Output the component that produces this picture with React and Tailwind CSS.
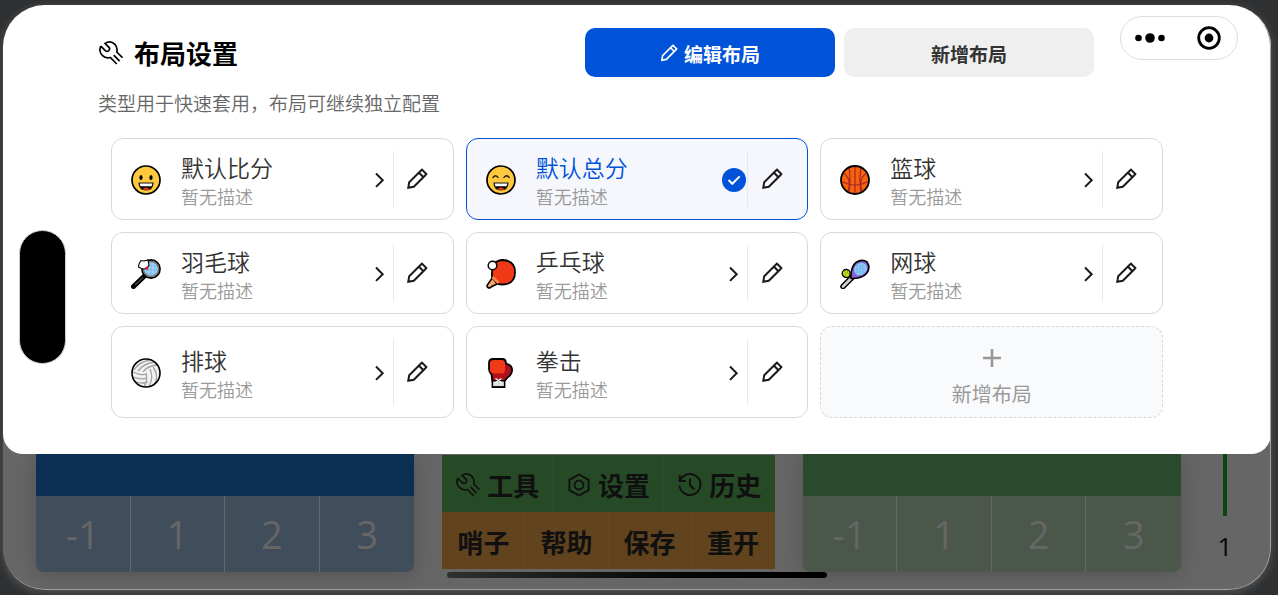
import React from "react";

function WrenchIcon({ className }) {
  return (
    <svg viewBox="0 0 24 24" className={className} fill="none" stroke="currentColor" strokeWidth="1.7" strokeLinejoin="miter" aria-hidden="true">
      <path d="M1.800 5.200 6.300 9.700c1.200 1 2.700.800 3.600-.200.900-1.100.800-2.500-.100-3.400L6 2.400C9.200.500 13.200.700 15.700 3.200c2.100 2.100 2.800 4.900 2.100 7.800l5.700 5.700M1.800 5.200C.4 8.400.9 12 3.300 14.400c2.200 2.200 5.200 2.900 8 2.100l6.500 6.500M14.700 14.200l5.900 5.900" />
    </svg>
  );
}

function PencilIcon({ className }) {
  return (
    <svg viewBox="0 0 24 24" className={className} fill="none" stroke="currentColor" strokeWidth="2.200" strokeLinejoin="miter" aria-hidden="true">
      <path d="M2.500 21.500 3.500 15.500 15.800 3.200l1.600-1.400 4.800 4.800-1.400 1.600L8.500 20.500 2.500 21.500ZM14 5l5 5" />
    </svg>
  );
}

function ChevronIcon() {
  return (
    <svg viewBox="0 0 24 24" className="size-6" fill="none" stroke="#1a1a1a" strokeWidth="2" aria-hidden="true">
      <path d="m8 5.500 6.700 6.700L8 18.900" />
    </svg>
  );
}

function CheckIcon() {
  return (
    <svg viewBox="0 0 24 24" className="size-6" fill="none" aria-hidden="true">
      <circle cx="12" cy="12" r="12" fill="#0052d9" />
      <path d="m6.500 12 3.800 3.800 7.400-7.400" stroke="#fff" strokeWidth="2" />
    </svg>
  );
}

function HexIcon({ className }) {
  return (
    <svg viewBox="0 0 24 24" className={className} fill="none" stroke="currentColor" strokeWidth="1.900" aria-hidden="true">
      <path d="m12 1.500 9.600 5.300v10.400L12 22.500l-9.600-5.300V6.800L12 1.500Z" />
      <circle cx="12" cy="12" r="4.500" />
    </svg>
  );
}

function HistoryIcon({ className }) {
  return (
    <svg viewBox="0 0 24 24" className={className} fill="none" stroke="currentColor" strokeWidth="1.900" aria-hidden="true">
      <path d="M1.800 2v6h6M2.200 7.600A10.500 10.500 0 1 1 1.500 12.500M12 5.500v6.800l4.300 4.200" />
    </svg>
  );
}

function Grin({ closed }) {
  return (
    <>
      <circle cx="15" cy="15" r="14" fill="#ffc83d" stroke="#000" strokeWidth="1.700" />
      {closed ? (
        <path d="M6.500 13q3-4.500 6 0M17.500 13q3-4.500 6 0" fill="none" stroke="#1a1a1a" strokeWidth="1.300" />
      ) : (
        <>
          <ellipse cx="10" cy="12.500" rx="1.600" ry="2.600" />
          <ellipse cx="20" cy="12.500" rx="1.600" ry="2.600" />
        </>
      )}
      <path d="M8 18h14q-.4 7-7 7t-7-7Z" fill="#000" stroke="#1a1a1a" strokeWidth="1.200" />
      <path d="M8.800 18.500h12.400l-.6 2.700H9.400Z" fill="#fff" />
      <path d="M12 24q3-2.400 6 0-3 1.300-6 0Z" fill="#f03a17" stroke="#f03a17" strokeWidth=".6" />
    </>
  );
}

const emojiArt = {
  grin: <Grin />,
  smile: <Grin closed />,
  basketball: (
    <>
      <circle cx="15" cy="15" r="14" fill="#f7630c" />
      <path d="M15 1v28M1.500 16.500q13.500 7 27 0M9 2.500q2 12 0 25M21 2.500q-2 12 0 25M3 8q5 3 6 8t-1 10M27 8q-5 3-6 8t1 10" fill="none" stroke="#a4262c" strokeWidth="1.200" />
      <circle cx="15" cy="15" r="14" fill="none" stroke="#000" strokeWidth="1.800" />
    </>
  ),
  badminton: (
    <>
      <path d="M2.500 27.500 14 16.500" stroke="#000" strokeWidth="5" strokeLinecap="round" />
      <path d="m4 26 8-7.500" stroke="#444" strokeWidth="1.500" />
      <circle cx="20" cy="10" r="9" fill="#9fd3f7" stroke="#000" strokeWidth="1.800" />
      <path d="M16 4v13M20 2v16M24 4v13M13 7h14M12 11h16M14 15h12" stroke="#70b4e4" strokeWidth=".7" />
      <circle cx="20" cy="10" r="7.600" fill="none" stroke="#767676" strokeWidth="1.500" />
      <path d="m8 5 2-3.500 3 .500 4-1 1 5-2.500 3.500-4 .500-4-2Z" fill="#fff" stroke="#000" strokeWidth="1.100" />
      <path d="m14 8.500 3-1.500.5 3-2 1Z" fill="#e81224" />
    </>
  ),
  pingpong: (
    <>
      <path d="m7 18-5 7q-2 2 0 3.500 1.600 1.200 3.500-.8l7.500-3.700Z" fill="#f7a36b" stroke="#000" strokeWidth="1.600" />
      <path d="M6 18q-1-17 11-17 12 1 12 12 0 12.500-13 12.500-4 0-5.500-1.500Z" fill="#f03a17" stroke="#000" strokeWidth="1.800" />
      <path d="m6.500 18 6 6" stroke="#f7894a" strokeWidth="2.500" />
      <circle cx="6.500" cy="6.500" r="4.300" fill="#fff" stroke="#000" strokeWidth="1.500" />
    </>
  ),
  tennis: (
    <>
      <path d="m3 27.500 9.500-9.500" stroke="#000" strokeWidth="5.500" strokeLinecap="round" />
      <path d="m3 27.500 9-9" stroke="#d2d2d2" strokeWidth="2.600" strokeLinecap="round" />
      <path d="M11 19.500q-.5-12 5-16 6-4 11-.500 4 6-.500 11.500-4 5-15.500 5Z" fill="#8764d8" stroke="#000" strokeWidth="1.600" />
      <ellipse cx="20.500" cy="10" rx="6.800" ry="5.800" transform="rotate(-45 20.500 10)" fill="#90d0fa" />
      <path d="M17 6v9M20 4v12M23 4v11M16 7h10M15 10h11M15 13h10" stroke="#6caee6" strokeWidth=".7" />
      <circle cx="6.200" cy="14.500" r="4" fill="#bfe52a" stroke="#000" strokeWidth="1.300" />
      <path d="M4 12q3 2 1 5M7 11.500q0 3 2 4" stroke="#799a00" strokeWidth=".8" fill="none" />
    </>
  ),
  volleyball: (
    <>
      <circle cx="15" cy="15" r="14" fill="#f2f2f2" />
      <path d="M3 12Q8 4 19 2M7 13Q12 6 23 4M12 14q4-6 14-7M2 14q8 4 14 2M2 19q8 3 14 1M5 24q6 2 12 0M15 15q2 7-2 14M19 11q4 9-1 17M22 9q6 8 2 16" fill="none" stroke="#a3a3a3" strokeWidth="1.300" />
      <circle cx="15" cy="15" r="14" fill="none" stroke="#000" strokeWidth="1.600" />
    </>
  ),
  boxing: (
    <>
      <path d="M6.500 19h12v10H6.500Z" fill="#e0e0e0" stroke="#000" strokeWidth="1.800" />
      <path d="M3 5q0-4 4-4h9q4 0 4 4.500l3.500 1.500q3 2 2.500 6-.500 4-4.500 6.500l-3 3.500H6.500L5.500 16.500Q3 14 3 11Z" fill="#b0101c" stroke="#000" strokeWidth="1.800" />
      <path d="M7.300 23.500h10.400v4.600H7.300Z" fill="#e0e0e0" />
      <path d="M4 6q0-4 4-4h7q4 0 4 4v6q0 3.500-3.500 3.500H8Q4 15.500 4 11Z" fill="#f03a17" />
      <path d="m9.500 20.500 6 4m0-4-6 4" stroke="#fff" strokeWidth="1.200" />
    </>
  ),
};

const layouts = [
  { name: "默认比分", art: "grin" },
  { name: "默认总分", art: "smile", selected: true },
  { name: "篮球", art: "basketball" },
  { name: "羽毛球", art: "badminton" },
  { name: "乒乓球", art: "pingpong" },
  { name: "网球", art: "tennis" },
  { name: "排球", art: "volleyball" },
  { name: "拳击", art: "boxing" },
];

function LayoutCard({ layout }) {
  const { name, art, selected } = layout;
  return (
    <div
      className={
        selected
          ? "flex items-stretch rounded-xl border border-[#0052d9] bg-[#f5f7fc] py-3 pl-[19px] pr-3"
          : "flex items-stretch rounded-xl border border-[#d5d8de] bg-white py-3 pl-[19px] pr-3"
      }
    >
      <button type="button" className="flex min-w-0 flex-1 items-center pr-px pt-[2px] text-left">
        <svg viewBox="0 0 30 30" className="mr-5 size-[30px] shrink-0" aria-hidden="true">
          {emojiArt[art]}
        </svg>
        <span className="flex min-w-0 flex-1 flex-col gap-1 font-[350]">
          <span className={selected ? "text-[23px] leading-7 text-[#0052d9]" : "text-[23px] leading-7 text-[#333333]"}>{name}</span>
          <span className="text-[18px] leading-[22px] text-[#999999]">暂无描述</span>
        </span>
        {selected ? <CheckIcon /> : <ChevronIcon />}
      </button>
      <button type="button" aria-label={"编辑" + name} className="flex w-12 items-center justify-center border-l border-[#e7e8eb] text-[#1a1a1a]">
        <PencilIcon className="size-[22px]" />
      </button>
    </div>
  );
}

function Sheet() {
  return (
    <section className="relative rounded-b-[20px] bg-white pb-9 pt-[23px]">
      <header className="flex items-center pl-24 pr-[177px]">
        <h1 className="flex flex-1 items-center gap-[11px] text-[26px] font-bold leading-9 text-black">
          <WrenchIcon className="size-6" />
          布局设置
        </h1>
        <div className="flex gap-[9px]">
          <button type="button" className="flex h-[49px] w-[250px] items-center justify-center gap-[6px] rounded-[10px] bg-[#0052d9] pt-1 text-[19px] font-bold text-white">
            <PencilIcon className="mb-1 size-[18px]" />
            编辑布局
          </button>
          <button type="button" className="h-[49px] w-[250px] rounded-[10px] bg-[#efefef] pt-1 text-[19px] font-bold text-[#333333]">
            新增布局
          </button>
        </div>
      </header>
      <p className="mt-3 pl-[95px] text-[19px] font-[350] leading-7 text-[#666666]">类型用于快速套用，布局可继续独立配置</p>
      <div className="mt-[21px] grid grid-cols-3 gap-3 px-[108px]">
        {layouts.map((layout) => (
          <LayoutCard key={layout.name} layout={layout} />
        ))}
        <button type="button" className="flex min-h-[92px] flex-col items-center justify-center rounded-xl border border-dashed border-[#d5d8de] bg-[#f9fafc] pt-2 text-[#999999]">
          <svg viewBox="0 0 24 24" className="my-1 size-6" fill="none" stroke="currentColor" strokeWidth="2.600" aria-hidden="true">
            <path d="M12 3v18M3 12h18" />
          </svg>
          <span className="mt-1 text-[20px] leading-8">新增布局</span>
        </button>
      </div>
    </section>
  );
}

function Capsule() {
  return (
    <div className="absolute right-[33px] top-[11px] flex h-11 w-[118px] items-center justify-between rounded-full border border-[#dddddd] bg-white pl-3 pr-4">
      <button type="button" aria-label="更多">
        <svg viewBox="0 0 34 12" className="h-3 w-[34px]" aria-hidden="true">
          <circle cx="5.500" cy="6" r="3.300" />
          <circle cx="17" cy="6" r="4.800" />
          <circle cx="28.500" cy="6" r="3.300" />
        </svg>
      </button>
      <button type="button" aria-label="关闭">
        <svg viewBox="0 0 24 24" className="size-6" aria-hidden="true">
          <circle cx="12" cy="12" r="10.300" fill="none" stroke="#000" strokeWidth="2.800" />
          <circle cx="12" cy="12" r="4.400" />
        </svg>
      </button>
    </div>
  );
}

function ScorePanel({ top, cell, line, digit }) {
  return (
    <div className={"flex flex-[378] flex-col overflow-hidden rounded-b-lg shadow-[0_2px_20px_rgba(0,0,0,0.2)] " + cell}>
      <div className={"h-[42px] " + top} />
      <div className="grid h-[76px] grid-cols-4">
        {["-1", "1", "2", "3"].map((n) => (
          <button key={n} type="button" className={"border-r pb-px font-['Open_Sans',sans-serif] text-[38px] font-medium leading-none last:border-r-0 " + line + " " + digit}>
            {n}
          </button>
        ))}
      </div>
    </div>
  );
}

function Toolbar() {
  const tools = [
    ["工具", WrenchIcon],
    ["设置", HexIcon],
    ["历史", HistoryIcon],
  ];
  return (
    <div className="mt-px flex flex-[332] flex-col self-start text-[26px] font-bold text-[#101010]">
      <div className="grid h-[57px] grid-cols-3 bg-[#264a26]">
        {tools.map(([label, Icon]) => (
          <button key={label} type="button" className="flex items-center justify-center gap-[7px] whitespace-nowrap border-r border-[#2a4e2a] pl-px pt-[2px] leading-9 last:border-r-0">
            <Icon className="size-6" />
            {label}
          </button>
        ))}
      </div>
      <div className="grid h-[57px] grid-cols-4 bg-[#61431e]">
        {["哨子", "帮助", "保存", "重开"].map((label) => (
          <button key={label} type="button" className="border-r border-[#654723] pt-[2px] leading-9 last:border-r-0">
            {label}
          </button>
        ))}
      </div>
    </div>
  );
}

export default function App() {
  return (
    <div className="flex min-h-screen flex-col bg-[#2f3032] pb-[5px] pl-[3px] pr-[7px] pt-[5px] font-['Noto_Sans_CJK_SC',sans-serif]">
      <main className="relative flex flex-1 flex-col overflow-hidden rounded-[42px] bg-[#666666] shadow-[0_2px_10px_rgba(255,255,255,0.2)]">
        <Sheet />
        <div className="flex flex-1 items-start gap-7 pl-[33px]">
          <ScorePanel top="bg-[#0a2f52]" cell="bg-[#404d5a]" line="border-[#666666]" digit="text-[#666666]" />
          <Toolbar />
          <ScorePanel top="bg-[#2b4a2b]" cell="bg-[#4b574b]" line="border-[#666666]" digit="text-[#666666]" />
          <div className="-ml-7 flex w-[90px] flex-col items-center pr-[2px] font-['Open_Sans',sans-serif]">
            <div className="h-[62px] w-1 bg-[#0c460c]" />
            <span className="mt-3 text-[26px] leading-9 text-[#080808]">1</span>
          </div>
        </div>
        <div className="absolute bottom-3 left-[35%] h-[6px] w-[30%] rounded-full bg-linear-to-r from-[#303030] to-black" />
        <div className="absolute left-4 top-[225px] h-[134px] w-[47px] rounded-full border border-[#cccccc] bg-black" />
        <Capsule />
        <div className="pointer-events-none absolute inset-0 rounded-[42px] border-b border-r border-[#a0a0a0]" />
      </main>
    </div>
  );
}
